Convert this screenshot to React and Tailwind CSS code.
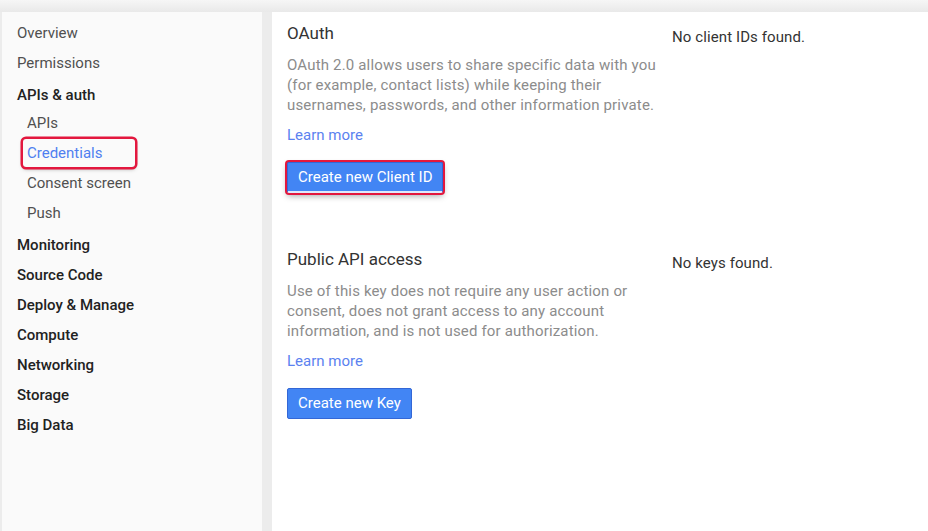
const font = { fontFamily: 'Roboto, "Noto Sans", Arial, sans-serif' };

function NavItem({ label, sub, header, active, className = '' }) {
  if (active) {
    return (
      <div className={`h-[30px] flex items-center pl-[6px] ${className}`}>
        <div className="h-[28px] w-[112px] flex items-center pl-[4px] rounded-[3px] ring-[2.5px] ring-[#e3173e] shadow-[0_2px_4px_rgba(0,0,0,0.35)] text-[#4f7ff0]">
          {label}
        </div>
      </div>
    );
  }
  return (
    <div
      className={`h-[30px] flex items-center ${sub ? 'pl-[10px] text-[#505050]' : ''} ${
        header ? 'font-medium text-[#222]' : ''
      } ${!sub && !header ? 'text-[#505050]' : ''} ${className}`}
    >
      {label}
    </div>
  );
}

function Section({ title, text, button, empty, highlight, buttonMt }) {
  return (
    <div className="flex">
      <div className="w-[385px] shrink-0">
        <h2 className="text-[17px] leading-[22px] text-[#333]">{title}</h2>
        <p className="mt-[11px] w-[378px] text-[15px] leading-[20px] tracking-[0.17px] text-[#8c8c8c]">{text}</p>
        <a className="block mt-[10px] text-[15px] leading-[20px] text-[#5b82f0] cursor-pointer">Learn more</a>
        <button
          className={`${buttonMt} h-[31px] px-[10px] rounded-[2px] bg-[#4285f4] border border-[#3367d6] text-white text-[15px] leading-none ${
            highlight ? 'ring-2 ring-[#e3173e] ring-offset-0 shadow-[0_3px_6px_rgba(0,0,0,0.35)] border-b-2 border-b-[#dfe9fb]' : ''
          }`}
        >
          {button}
        </button>
      </div>
      <div className="pt-[5px] text-[15px] leading-[20px] tracking-[0.1px] text-[#333]">{empty}</div>
    </div>
  );
}

export default function App() {
  return (
    <div className="h-screen flex flex-col bg-[#ececec] overflow-hidden" style={font}>
      <div className="h-[12px] shrink-0 bg-gradient-to-b from-[#f6f6f6] to-[#e9e9e9]" />
      <div className="flex flex-1 min-h-0">
        <nav className="ml-[2px] w-[260px] shrink-0 bg-[#fafafa] pt-[6px] pl-[15px] text-[15px]">
          <NavItem label="Overview" />
          <NavItem label="Permissions" />
          <NavItem label="APIs & auth" header className="mt-[2px]" />
          <div className="-mt-[2px]">
            <NavItem label="APIs" sub />
            <NavItem label="Credentials" sub active />
            <NavItem label="Consent screen" sub />
            <NavItem label="Push" sub />
          </div>
          <NavItem label="Monitoring" header className="mt-[2px]" />
          <NavItem label="Source Code" header />
          <NavItem label="Deploy & Manage" header />
          <NavItem label="Compute" header />
          <NavItem label="Networking" header />
          <NavItem label="Storage" header />
          <NavItem label="Big Data" header />
        </nav>
        <main className="ml-[10px] flex-1 bg-white pt-[10px] pl-[15px]">
          <Section
            title="OAuth"
            text="OAuth 2.0 allows users to share specific data with you (for example, contact lists) while keeping their usernames, passwords, and other information private."
            button="Create new Client ID"
            empty="No client IDs found."
            highlight
            buttonMt="mt-[17px]"
          />
          <div className="h-[55px]" />
          <Section
            title="Public API access"
            text="Use of this key does not require any user action or consent, does not grant access to any account information, and is not used for authorization."
            button="Create new Key"
            empty="No keys found."
            buttonMt="mt-[17px]"
          />
        </main>
      </div>
    </div>
  );
}
